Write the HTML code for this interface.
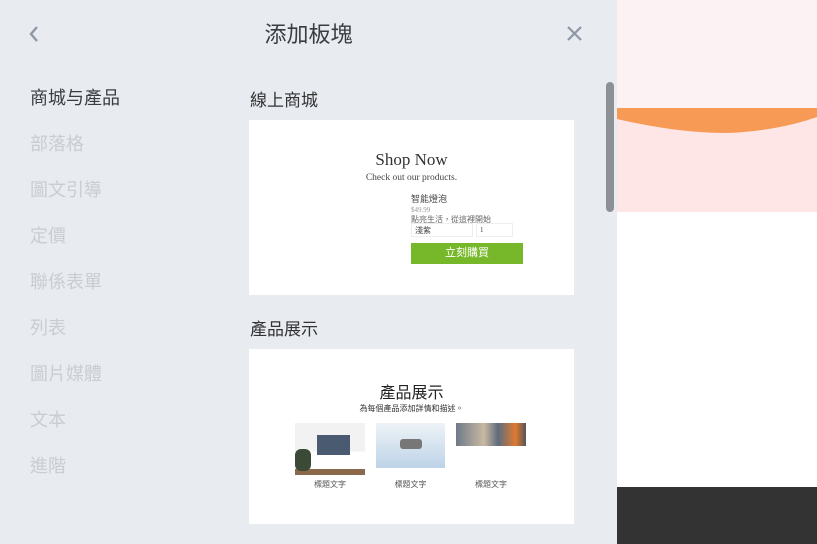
<!DOCTYPE html>
<html><head><meta charset="utf-8"><style>
*{margin:0;padding:0;box-sizing:border-box}
body{width:817px;height:544px;overflow:hidden;position:relative;background:#e8ebf0;font-family:"Liberation Sans","Noto Sans CJK TC",sans-serif}
.abs{position:absolute}
.nav{left:30px;font-size:18px;color:#c9ccd1}
.card{background:#fff;left:249px;width:325px}
.h2{left:250px;font-size:17px;color:#333}
.serif{font-family:"Liberation Serif","Noto Serif CJK SC",serif}
</style></head><body>
<svg class="abs" style="left:28px;top:25px" width="12" height="18" viewBox="0 0 12 18"><path d="M9 2 L3 9 L9 16" stroke="#8e97a3" stroke-width="2.4" fill="none"/></svg>
<div class="abs" style="left:0;width:617px;top:17px;text-align:center;font-size:22px;color:#3a3d40">添加板塊</div>
<svg class="abs" style="left:566px;top:25px" width="17" height="17" viewBox="0 0 17 17"><path d="M2 2L15 15M15 2L2 15" stroke="#8e97a3" stroke-width="2.2"/></svg>
<div class="abs nav" style="top:84px;color:#3a3d40">商城与產品</div>
<div class="abs nav" style="top:130px">部落格</div>
<div class="abs nav" style="top:176px">圖文引導</div>
<div class="abs nav" style="top:222px">定價</div>
<div class="abs nav" style="top:268px">聯係表單</div>
<div class="abs nav" style="top:314px">列表</div>
<div class="abs nav" style="top:360px">圖片媒體</div>
<div class="abs nav" style="top:406px">文本</div>
<div class="abs nav" style="top:452px">進階</div>

<div class="abs h2" style="top:86px">線上商城</div>
<div class="abs card" style="top:120px;height:175px">
 <div class="abs serif" style="left:0;width:325px;top:30px;text-align:center;font-size:17px;color:#333">Shop Now</div>
 <div class="abs serif" style="left:0;width:325px;top:53px;text-align:center;font-size:9.5px;color:#444">Check out our products.</div>
 <div class="abs" style="left:162px;top:72px;font-size:9px;color:#444">智能燈泡</div>
 <div class="abs serif" style="left:162px;top:86px;font-size:7px;color:#999">$49.99</div>
 <div class="abs" style="left:162px;top:94px;font-size:8px;color:#666">點亮生活，從這裡開始</div>
 <div class="abs" style="left:162px;top:103px;width:62px;height:14px;border:1px solid #eee;font-size:8px;color:#444;padding:1px 3px">淺紫</div>
 <div class="abs serif" style="left:227px;top:103px;width:37px;height:14px;border:1px solid #eee;font-size:7px;color:#444;padding:2px 3px">1</div>
 <div class="abs" style="left:162px;top:123px;width:112px;height:21px;background:#76b82a;color:#fff;font-size:11px;text-align:center;line-height:21px">立刻購買</div>
</div>

<div class="abs h2" style="top:315px">產品展示</div>
<div class="abs card" style="top:349px;height:175px">
 <div class="abs" style="left:0;width:325px;top:30px;text-align:center;font-size:16px;color:#222">產品展示</div>
 <div class="abs" style="left:0;width:325px;top:54px;text-align:center;font-size:8px;color:#333">為每個產品添加詳情和描述。</div>
 <div class="abs" style="left:46px;top:74px;width:70px;height:52px;background:linear-gradient(#f2f2f2 55%,#fff 55%,#fff 88%,#8a6a4a 88%)"><div class="abs" style="left:22px;top:12px;width:33px;height:20px;background:#4a5a70"></div><div class="abs" style="left:0;top:26px;width:16px;height:22px;background:#3b4a36;border-radius:6px"></div></div>
 <div class="abs" style="left:127px;top:74px;width:69px;height:45px;background:linear-gradient(#eef3f7,#bdd3e8)"><div class="abs" style="left:24px;top:16px;width:22px;height:10px;background:#777;border-radius:3px"></div></div>
 <div class="abs" style="left:207px;top:74px;width:70px;height:23px;background:linear-gradient(90deg,#6e7a88 0,#c9b9a2 40%,#5d6c7e 60%,#e07a30 85%,#555 100%)"></div>
 <div class="abs" style="left:46px;top:130px;width:70px;text-align:center;font-size:8px;color:#555">標題文字</div>
 <div class="abs" style="left:127px;top:130px;width:69px;text-align:center;font-size:8px;color:#555">標題文字</div>
 <div class="abs" style="left:207px;top:130px;width:70px;text-align:center;font-size:8px;color:#555">標題文字</div>
</div>

<div class="abs" style="left:606px;top:82px;width:8px;height:130px;background:#8d9095;border-radius:4px"></div>

<div class="abs" style="left:617px;top:0;width:200px;height:544px;background:#fff"></div>
<div class="abs" style="left:617px;top:0;width:200px;height:108px;background:#fcf2f3"></div>
<div class="abs" style="left:617px;top:108px;width:200px;height:104px;background:#fee6e6"></div>
<svg class="abs" style="left:617px;top:107px" width="200" height="28" viewBox="0 0 200 28"><path d="M0 1 H200 V10 Q160 24 110 26 Q60 26 0 12 Z" fill="#f79a55"/></svg>
<div class="abs" style="left:617px;top:487px;width:200px;height:57px;background:#333"></div>
</body></html>
